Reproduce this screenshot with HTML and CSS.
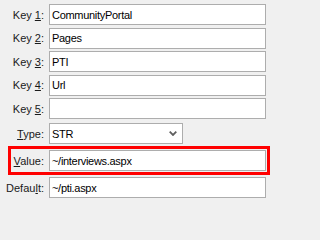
FILE: index.html
```html
<!DOCTYPE html>
<html>
<head>
<meta charset="utf-8">
<link rel="stylesheet" href="styles.css">
</head>
<body>
<div class="form">
  <div class="rows">
    <div class="row"><span class="label">Key <u>1</u>:</span><div class="field">CommunityPortal</div></div>
    <div class="row"><span class="label">Key <u>2</u>:</span><div class="field">Pages</div></div>
    <div class="row"><span class="label">Key <u>3</u>:</span><div class="field">PTI</div></div>
    <div class="row"><span class="label">Key <u>4</u>:</span><div class="field">Url</div></div>
    <div class="row"><span class="label">Key <u>5</u>:</span><div class="field"></div></div>
  </div>
  <div class="row type-row"><span class="label"><u>T</u>ype:</span>
    <div class="field select"><span>STR</span>
      <svg class="chev" width="8" height="5" viewBox="0 0 8 5"><polyline points="0.7,0.7 4,4 7.3,0.7" fill="none" stroke="#5f5f5f" stroke-width="1.8"/></svg>
    </div>
  </div>
  <div class="row highlight"><span class="label"><u>V</u>alue:</span><div class="field">~/interviews.aspx</div></div>
  <div class="row default-row"><span class="label">Defau<u>l</u>t:</span><div class="field">~/pti.aspx</div></div>
</div>
</body>
</html>
```
FILE: styles.css
```css
html, body {
  margin: 0;
  padding: 0;
  background: #f0f0f0;
}
body {
  font-family: "Liberation Sans", Arial, sans-serif;
  font-size: 11px;
  color: #000;
}
.form {
  padding-top: 4px;
  display: flex;
  flex-direction: column;
}
.rows {
  display: flex;
  flex-direction: column;
  gap: 2.5px;
}
.row {
  display: flex;
  align-items: center;
  height: 21px;
}
.label {
  width: 49px;
  box-sizing: border-box;
  padding-right: 5px;
  text-align: right;
  white-space: nowrap;
  color: #1a1a1a;
}
.label u {
  text-decoration-thickness: 1px;
  text-underline-offset: 1px;
}
.field {
  width: 217px;
  height: 21px;
  box-sizing: border-box;
  border: 1px solid #adadad;
  background: #fff;
  padding: 0 2px;
  display: flex;
  align-items: center;
  white-space: nowrap;
  overflow: hidden;
  letter-spacing: -0.3px;
}
.type-row {
  margin-top: 4px;
}
.select {
  width: 134px;
  justify-content: space-between;
  padding-right: 5px;
}
.chev {
  display: block;
}
.highlight {
  margin-top: 2px;
  margin-left: 8px;
  width: 262px;
  height: 29px;
  box-sizing: border-box;
  border: 3px solid #ff0000;
  padding: 1px 1px 1px 0;
}
.highlight .label {
  width: 38px;
}
.default-row {
  margin-top: 2px;
}
```
